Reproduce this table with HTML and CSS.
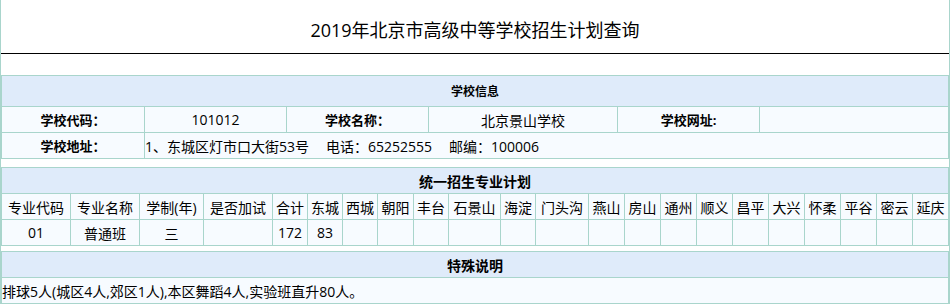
FILE: index.html
```html
<!DOCTYPE html>
<html lang="zh-CN">
<head>
<meta charset="utf-8">
<title>2019年北京市高级中等学校招生计划查询</title>
<link rel="stylesheet" href="styles.css">
</head>
<body>
<div class="page">
  <div class="title">2019年北京市高级中等学校招生计划查询</div>

  <div class="grid info">
    <div class="head head-sm span-all">学校信息</div>
    <div class="cell label">学校代码：</div>
    <div class="cell">101012</div>
    <div class="cell label">学校名称：</div>
    <div class="cell">北京景山学校</div>
    <div class="cell label">学校网址:</div>
    <div class="cell"></div>
    <div class="cell label">学校地址：</div>
    <div class="cell left span-rest"><span>1、东城区灯市口大街53号</span><span class="sp">电话：65252555</span><span class="sp">邮编：100006</span></div>
  </div>

  <div class="grid plan">
    <div class="head span-all">统一招生专业计划</div>
    <div class="cell">专业代码</div>
    <div class="cell">专业名称</div>
    <div class="cell">学制(年)</div>
    <div class="cell">是否加试</div>
    <div class="cell">合计</div>
    <div class="cell">东城</div>
    <div class="cell">西城</div>
    <div class="cell">朝阳</div>
    <div class="cell">丰台</div>
    <div class="cell">石景山</div>
    <div class="cell">海淀</div>
    <div class="cell">门头沟</div>
    <div class="cell">燕山</div>
    <div class="cell">房山</div>
    <div class="cell">通州</div>
    <div class="cell">顺义</div>
    <div class="cell">昌平</div>
    <div class="cell">大兴</div>
    <div class="cell">怀柔</div>
    <div class="cell">平谷</div>
    <div class="cell">密云</div>
    <div class="cell">延庆</div>

    <div class="cell">01</div>
    <div class="cell">普通班</div>
    <div class="cell">三</div>
    <div class="cell"></div>
    <div class="cell">172</div>
    <div class="cell">83</div>
    <div class="cell"></div>
    <div class="cell"></div>
    <div class="cell"></div>
    <div class="cell"></div>
    <div class="cell"></div>
    <div class="cell"></div>
    <div class="cell"></div>
    <div class="cell"></div>
    <div class="cell"></div>
    <div class="cell"></div>
    <div class="cell"></div>
    <div class="cell"></div>
    <div class="cell"></div>
    <div class="cell"></div>
    <div class="cell"></div>
    <div class="cell"></div>
  </div>

  <div class="grid note">
    <div class="head">特殊说明</div>
    <div class="cell left">排球5人(城区4人,郊区1人),本区舞蹈4人,实验班直升80人。</div>
  </div>
</div>
</body>
</html>
```

FILE: styles.css
```css
html, body {
  margin: 0;
  padding: 0;
  background: #ffffff;
}

body {
  font-family: "Open Sans", "Noto Sans CJK SC", sans-serif;
  font-size: 14px;
  color: #000;
}

.page {
  width: 950px;
  height: 304px;
  box-sizing: border-box;
  border-left: 1px solid #a9d5cc;
  border-right: 1px solid #a9d5cc;
}

.title {
  height: 46px;
  padding-top: 7px;
  line-height: 46px;
  font-size: 18px;
  text-align: center;
  border-bottom: 1px solid #000;
  font-family: "Open Sans", "Noto Sans CJK SC", sans-serif;
}

.grid {
  display: grid;
  gap: 1px;
  background: #a9d5cc;
  border: 1px solid #a9d5cc;
  grid-auto-rows: 25px;
}

.info {
  margin-top: 21px;
  grid-template-columns: 142px 141px 141px 188px 141px 188px;
  grid-template-rows: 30px;
}

.plan {
  margin-top: 8px;
  grid-template-columns: 68px 68px 63px 68px 34px 34px 34px 35px 34px 51px 34px 52px 35px repeat(9, 35px);
}

.note {
  margin-top: 5px;
  grid-template-columns: 1fr;
}

.head {
  background: #dfebfa;
  display: flex;
  align-items: center;
  justify-content: center;
  font-weight: bold;
  font-size: 14px;
}

.head-sm {
  font-size: 12px;
}

.span-all {
  grid-column: 1 / -1;
}

.span-rest {
  grid-column: 2 / -1;
}

.cell {
  background: #f7fbff;
  display: flex;
  align-items: center;
  justify-content: center;
  white-space: nowrap;
  overflow: hidden;
}

.cell.left {
  justify-content: flex-start;
  padding-left: 0;
}

.label {
  font-weight: bold;
  font-size: 13px;
}

.sp {
  margin-left: 17px;
}
```
